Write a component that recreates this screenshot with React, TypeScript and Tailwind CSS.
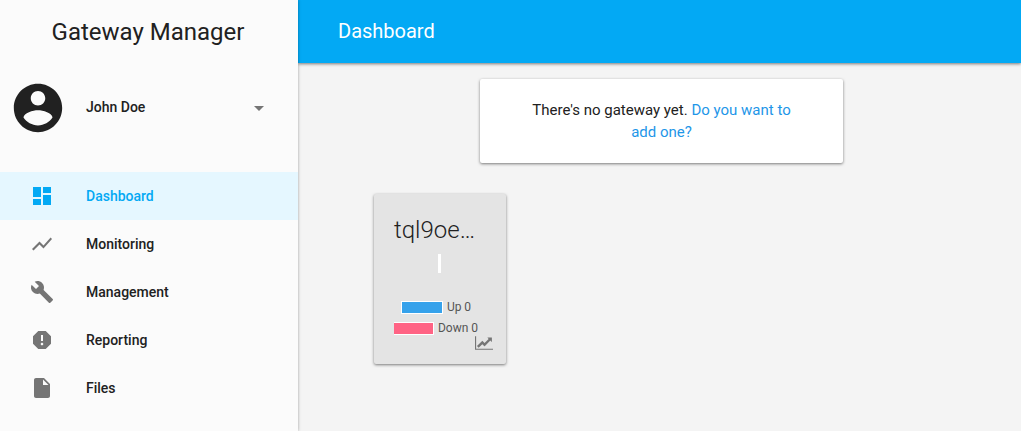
import type { IconType } from 'react-icons';
import {
  MdArrowDropDown,
  MdBuild,
  MdDashboard,
  MdInsertDriveFile,
  MdReport,
  MdShowChart,
} from 'react-icons/md';

type NavEntry = { label: string; icon: IconType; active?: boolean };

const NAV: NavEntry[] = [
  { label: 'Dashboard', icon: MdDashboard, active: true },
  { label: 'Monitoring', icon: MdShowChart },
  { label: 'Management', icon: MdBuild },
  { label: 'Reporting', icon: MdReport },
  { label: 'Files', icon: MdInsertDriveFile },
];

function AccountIcon() {
  return (
    <svg viewBox="0 0 24 24" className="size-[58px] shrink-0" fill="currentColor" aria-hidden="true">
      <path d="M12 2C6.48 2 2 6.48 2 12s4.48 10 10 10 10-4.48 10-10S17.52 2 12 2zm0 3c1.66 0 3 1.34 3 3s-1.34 3-3 3-3-1.34-3-3 1.34-3 3-3zm0 14.2c-2.5 0-4.71-1.28-6-3.22.03-1.99 4-3.08 6-3.08 1.99 0 5.97 1.09 6 3.08-1.29 1.94-3.5 3.22-6 3.22z" />
    </svg>
  );
}

function LineChartIcon() {
  return (
    <svg viewBox="0 0 2048 1792" className="h-4 w-[18px]" fill="currentColor" aria-hidden="true">
      <path d="M2048 1536v128h-2048v-1536h128v1408h1920zM1920 288v435q0 21-19.5 29.5t-35.5-7.5l-121-121-633 633q-10 10-23 10t-23-10l-233-233-416 416-192-192 585-585q10-10 23-10t23 10l233 233 464-464-121-121q-16-16-7.5-35.5t29.5-19.5h435q14 0 23 9t9 23z" />
    </svg>
  );
}

function Sidebar() {
  return (
    <aside className="z-10 w-[298px] shrink-0 bg-[#fbfbfb] shadow-[0_0_3px_rgba(0,0,0,0.35)]">
      <h1 className="pt-4 pr-0.5 text-center text-2xl leading-8 font-normal">Gateway Manager</h1>
      <button type="button" className="mt-[31px] flex w-full items-center pr-[27px] pl-[9px] text-left">
        <AccountIcon />
        <span className="ml-[19px] grow pb-0.5 text-sm font-medium">John Doe</span>
        <MdArrowDropDown className="size-6 text-[#757575]" />
      </button>
      <nav className="mt-[35px]">
        {NAV.map(({ label, icon: Icon, active }) => (
          <a
            key={label}
            href="#"
            aria-current={active ? 'page' : undefined}
            className={`flex h-12 items-center gap-8 pl-[30px] text-sm font-medium ${
              active ? 'bg-[#e5f7ff] text-[#03a9f4]' : ''
            }`}
          >
            <Icon className={active ? 'size-6' : 'size-6 text-[#757575]'} />
            {label}
          </a>
        ))}
      </nav>
    </aside>
  );
}

function GatewayCard() {
  return (
    <article className="flex w-[132px] flex-col rounded-xs bg-[#e4e4e4] px-5 pt-5 pb-[13px] shadow-[0_1px_3px_rgba(0,0,0,0.5)]">
      <h3 className="text-2xl leading-8 font-light">tql9oe…</h3>
      <div className="mt-2 ml-11 h-[19px] w-[3px] bg-white" />
      <ul className="mt-[27px] flex flex-col items-center gap-[7px] pr-2 text-xs leading-[14px] text-[#555]">
        <li className="flex items-center gap-1">
          <span className="h-[13px] w-[42px] border border-white bg-[#36a2eb]" />
          Up 0
        </li>
        <li className="flex items-center gap-1 whitespace-nowrap">
          <span className="h-[13px] w-10 border border-l-0 border-white bg-[#ff6384]" />
          Down 0
        </li>
      </ul>
      <a href="#" aria-label="Show statistics" className="-mr-[7px] self-end text-[#757575]">
        <LineChartIcon />
      </a>
    </article>
  );
}

export default function App() {
  return (
    <div className="flex min-h-screen bg-[#f4f4f4] font-['Roboto',sans-serif] text-[#212121]">
      <Sidebar />
      <div className="min-w-0 grow">
        <header className="bg-[#03a9f4] px-10 pt-[15px] pb-4 text-white shadow-[0_1px_3px_rgba(0,0,0,0.5)]">
          <h2 className="text-xl leading-8 font-normal">Dashboard</h2>
        </header>
        <main className="pt-4 pl-1">
          <p className="mx-auto max-w-[363px] rounded-xs bg-white px-12 py-5 text-center text-[15px] leading-[22px] shadow-[0_1px_3px_rgba(0,0,0,0.5)]">
            There's no gateway yet.{' '}
            <a href="#" className="text-[#1e96e8]">
              Do you want to add one?
            </a>
          </p>
          <section className="mt-[31px] flex flex-wrap gap-4 px-[72px]">
            <GatewayCard />
          </section>
        </main>
      </div>
    </div>
  );
}
